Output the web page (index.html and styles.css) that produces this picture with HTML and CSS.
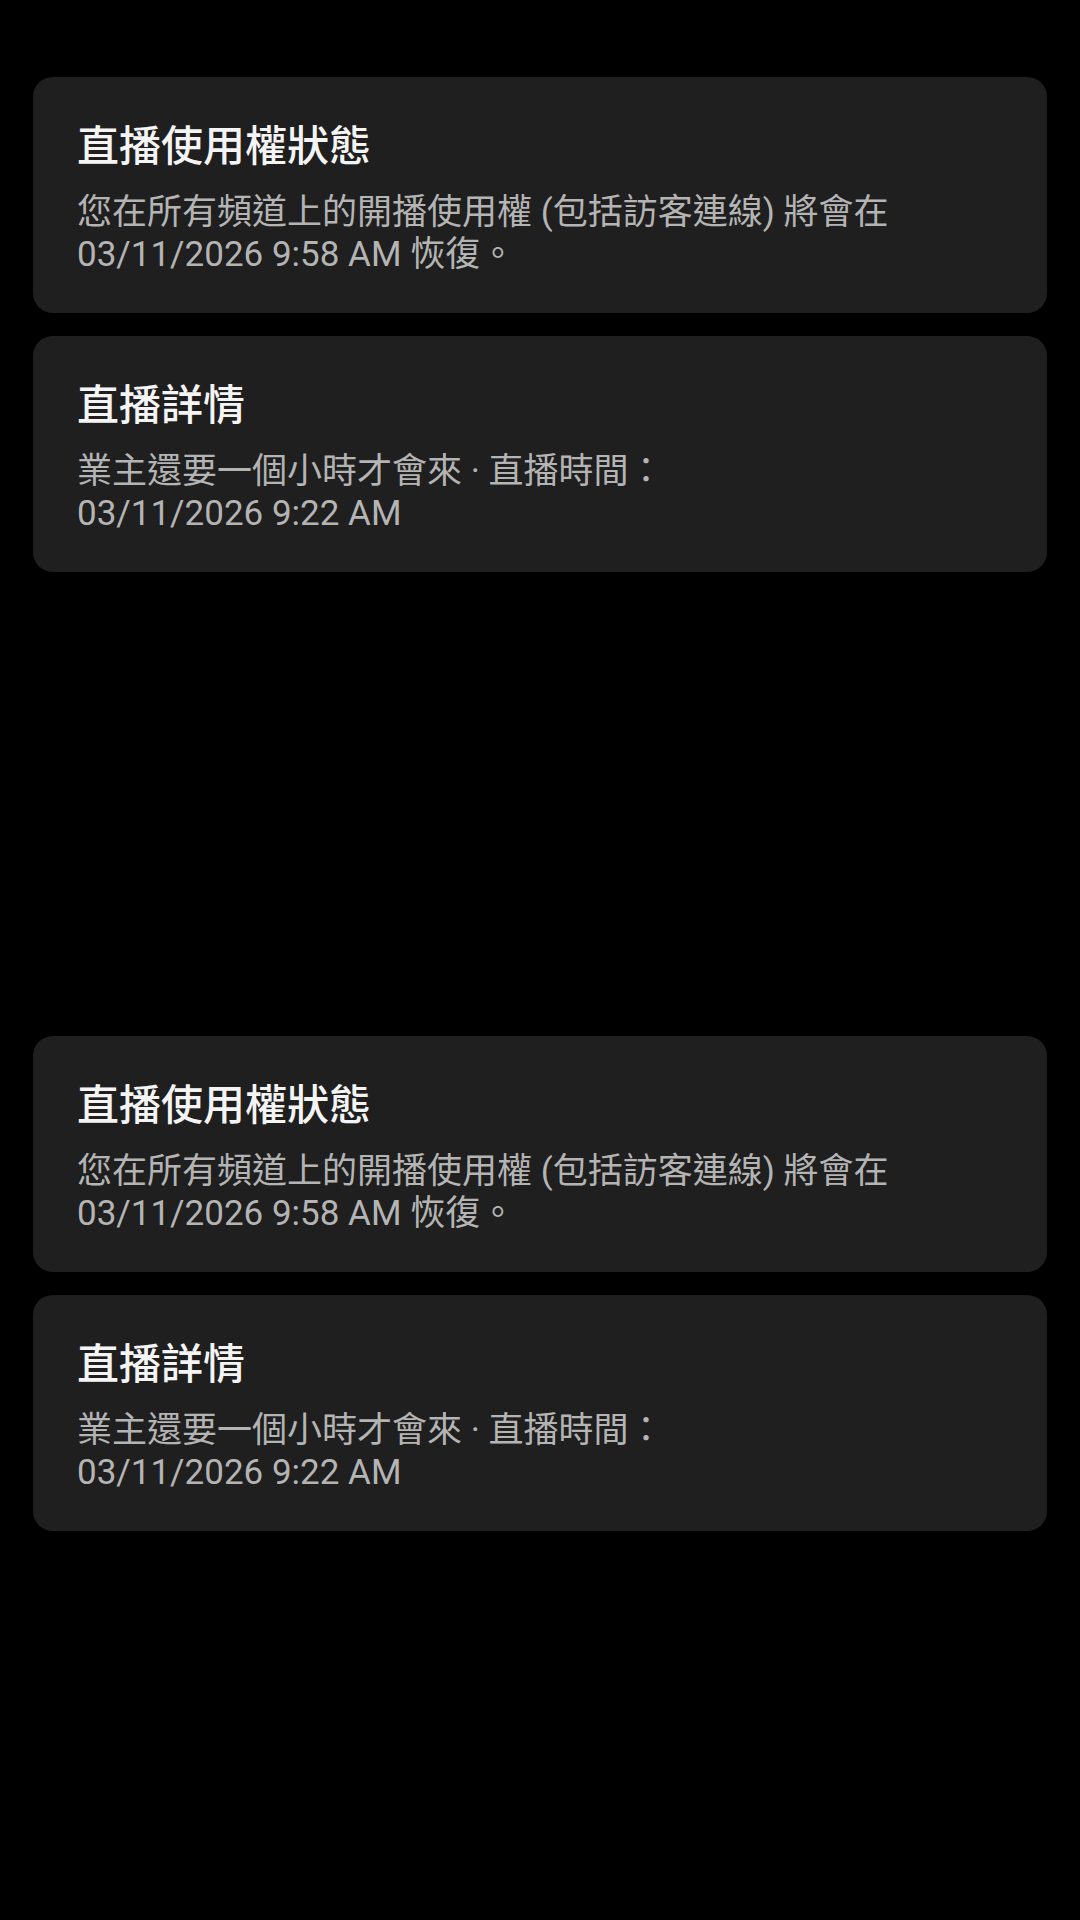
FILE: index.html
```html
<!DOCTYPE html>
<html lang="zh-Hant">
<head>
<meta charset="UTF-8" />
<meta name="viewport" content="width=device-width, initial-scale=1.0">
<title>直播狀態</title>
<link rel="stylesheet" href="styles.css">
</head>
<body>
<div class="group">
<div class="info-card">
<div class="card-title">直播使用權狀態</div>
<div class="card-text">您在所有頻道上的開播使用權 (包括訪客連線) 將會在<br>03/11/2026 9:58 AM 恢復。</div>
</div>
<div class="info-card">
<div class="card-title">直播詳情</div>
<div class="card-text">業主還要一個小時才會來 · 直播時間：<br>03/11/2026 9:22 AM</div>
</div>
</div>

<div class="group">
<div class="info-card">
<div class="card-title">直播使用權狀態</div>
<div class="card-text">您在所有頻道上的開播使用權 (包括訪客連線) 將會在<br>03/11/2026 9:58 AM 恢復。</div>
</div>
<div class="info-card">
<div class="card-title">直播詳情</div>
<div class="card-text">業主還要一個小時才會來 · 直播時間：<br>03/11/2026 9:22 AM</div>
</div>
</div>
</body>
</html>
```

FILE: styles.css
```css
html, body {
  background-color: #000;
}
body {
  margin: 0;
  padding: 77px 33px 0;
  font-family: Roboto, "Noto Sans CJK TC", sans-serif;
  color: #f2f2f2;
}
.group {
  display: flex;
  flex-direction: column;
  gap: 23px;
}
.group + .group {
  margin-top: 464px;
}
.info-card {
  background-color: #1f1f1f;
  border-radius: 20px;
  height: 236px;
  box-sizing: border-box;
  padding: 42px 44px 0;
}
.card-title {
  font-size: 42px;
  font-weight: 500;
  line-height: 56px;
  color: #f4f4f4;
}
.card-text {
  margin-top: 17px;
  font-size: 35px;
  line-height: 42px;
  color: #b4b4b4;
}
```
